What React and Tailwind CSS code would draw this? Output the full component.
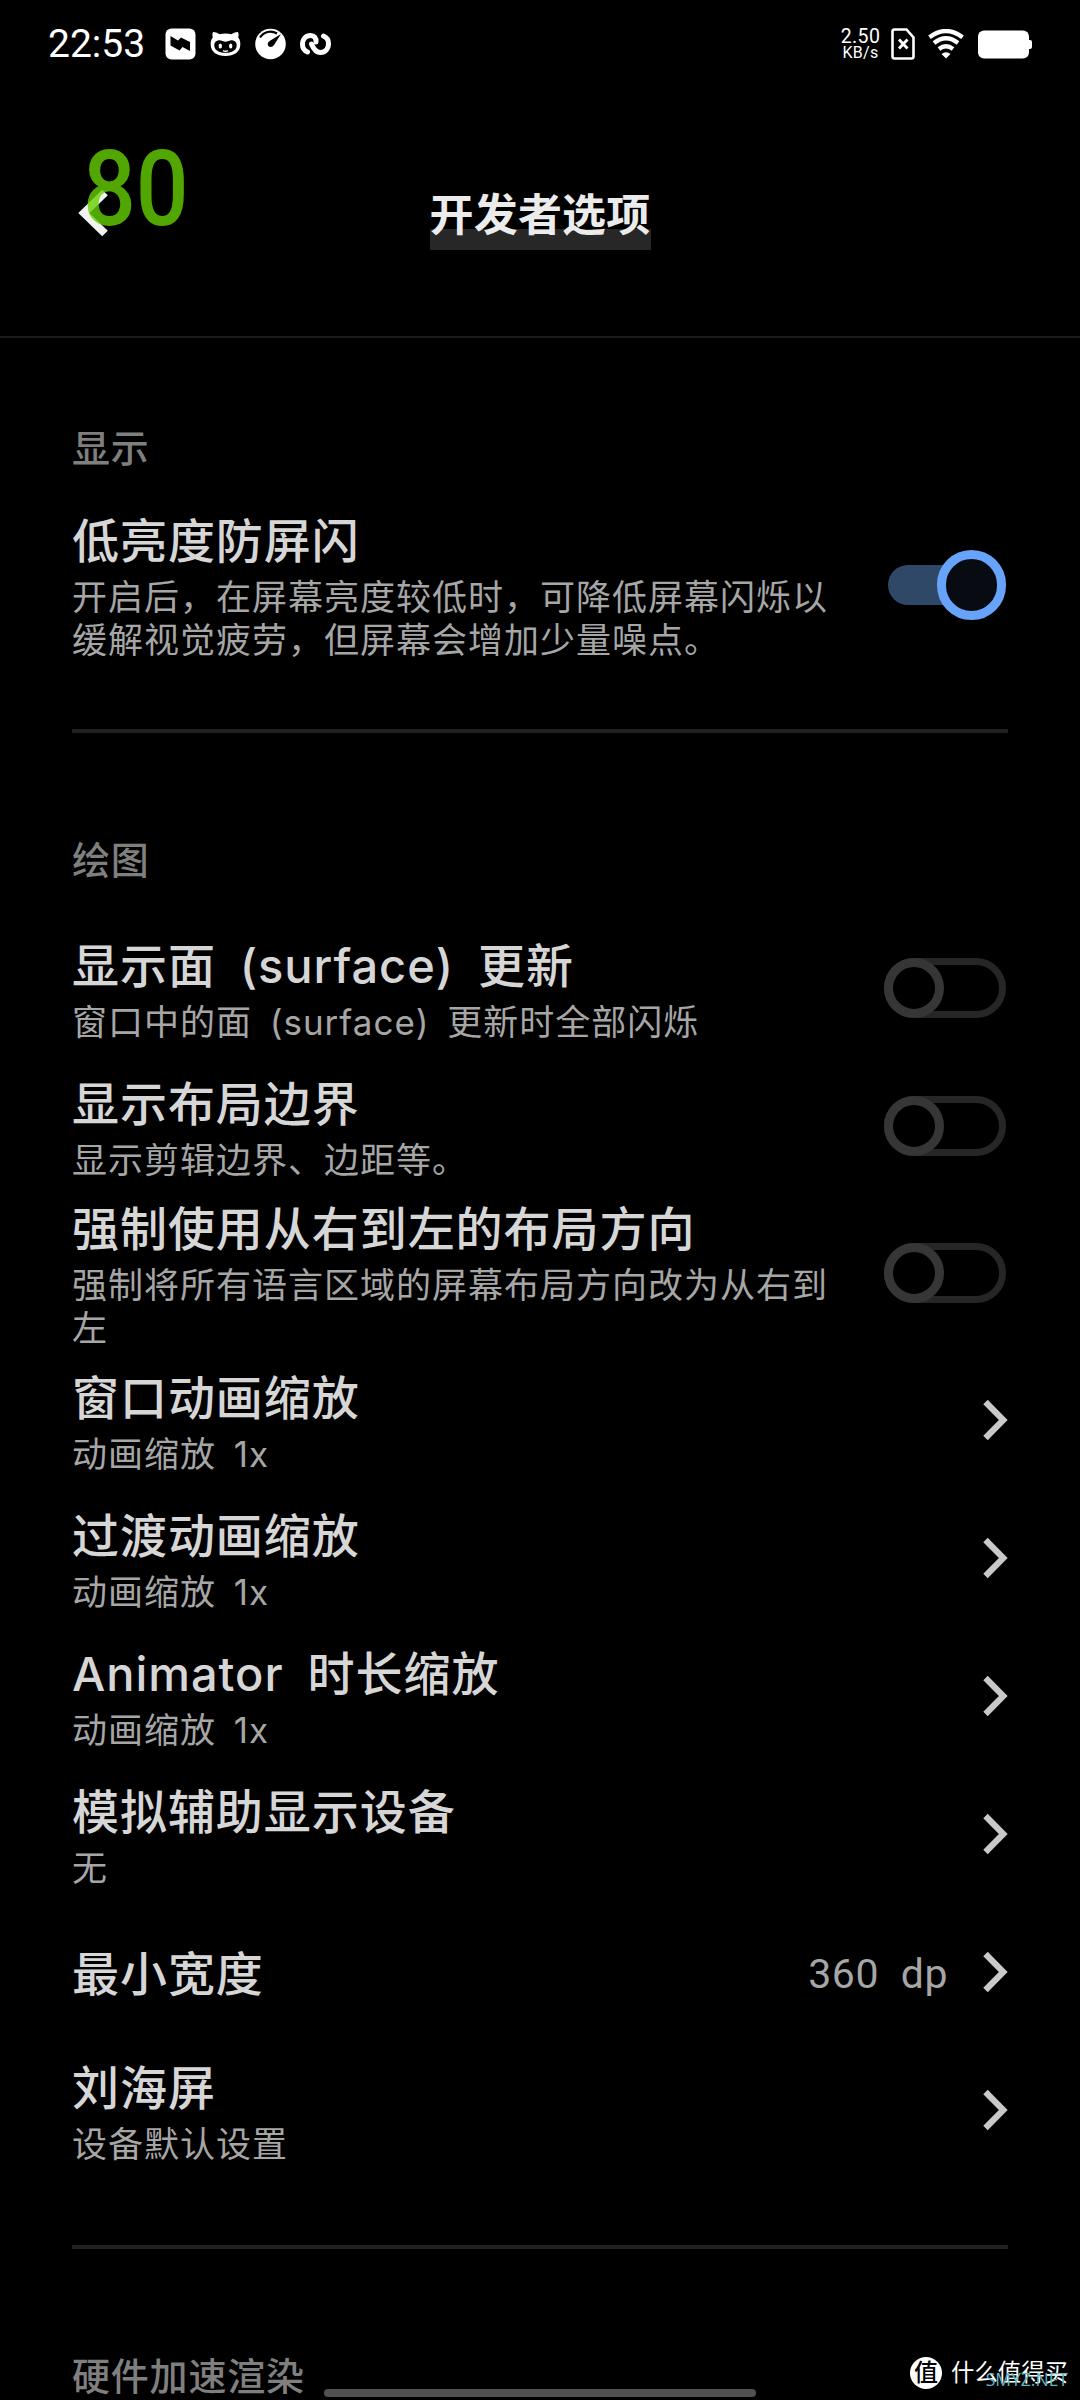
import React, { useState } from "react";

const displayItems = [
  {
    id: "flicker",
    title: "低亮度防屏闪",
    desc: "开启后，在屏幕亮度较低时，可降低屏幕闪烁以缓解视觉疲劳，但屏幕会增加少量噪点。",
    type: "switch",
    tall: true,
  },
];

const drawItems = [
  {
    id: "surface",
    title: "显示面  (surface)  更新",
    desc: "窗口中的面  (surface)  更新时全部闪烁",
    type: "switch",
  },
  {
    id: "bounds",
    title: "显示布局边界",
    desc: "显示剪辑边界、边距等。",
    type: "switch",
  },
  {
    id: "rtl",
    title: "强制使用从右到左的布局方向",
    desc: "强制将所有语言区域的屏幕布局方向改为从右到左",
    type: "switch",
    tall: true,
  },
  { id: "window", title: "窗口动画缩放", desc: "动画缩放  1x", type: "link" },
  { id: "transition", title: "过渡动画缩放", desc: "动画缩放  1x", type: "link" },
  { id: "animator", title: "Animator  时长缩放", desc: "动画缩放  1x", type: "link" },
  { id: "secondary", title: "模拟辅助显示设备", desc: "无", type: "link" },
  { id: "width", title: "最小宽度", value: "360  dp", type: "link" },
  { id: "notch", title: "刘海屏", desc: "设备默认设置", type: "link" },
];

function StatusBar() {
  return (
    <div className="h-[88px] flex items-center justify-between pl-[48px] pr-[48px] text-white">
      <div className="flex items-center">
        <span className="w-[117px] text-[39px] leading-none font-['Roboto']">
          22:53
        </span>
        <svg className="w-[31px] h-[32px]" viewBox="0 0 31 32">
          <rect x="0.5" y="0.5" width="30" height="31" rx="6" fill="#fff" />
          <path
            d="M5.500 8L13 12.500L16 9.500L25 14V23L17.500 19L14.500 22.500L5.500 17.500Z"
            fill="#000"
          />
        </svg>
        <svg className="w-[31px] h-[26px] ml-[14px]" viewBox="0 0 31 26">
          <path
            d="M3 1C6 1 8 2.2 9.5 3.2C13 2.4 18 2.4 21.500 3.200C23 2.200 25 1 28 1C28.800 3 28.700 5 28.200 6.500C30 8.500 30.500 11 30.300 14C30 21 24 25 15.500 25C7 25 1 21 0.700 14C0.500 11 1 8.500 2.800 6.500C2.300 5 2.200 3 3 1Z"
            fill="#fff"
          />
          <path
            d="M8 9.500C11 8.800 13 10.800 15.500 10.800C18 10.800 20 8.800 23 9.500C26 10.200 27 12.500 26.700 15C26 20 21 21.800 15.500 21.800C10 21.800 5 20 4.300 15C4 12.500 5 10.200 8 9.500Z"
            fill="#000"
          />
          <ellipse cx="10.300" cy="15" rx="1.700" ry="2.500" fill="#fff" />
          <ellipse cx="20.700" cy="15" rx="1.700" ry="2.500" fill="#fff" />
          <path d="M13 19.600Q15.500 21 18 19.600" stroke="#fff" strokeWidth="1.400" fill="none" />
        </svg>
        <svg className="w-[31px] h-[32px] ml-[14px]" viewBox="0 0 31 32">
          <circle cx="15.500" cy="16" r="15.300" fill="#fff" />
          <path d="M5 9.500C9 3.500 16 2.200 22 5.500" stroke="#000" strokeWidth="2.200" fill="none" />
          <path d="M26 6L19 17C17.500 19.500 14 19.500 13 17.500C12.200 15.500 13.200 13.800 15 12.800Z" fill="#000" />
        </svg>
        <svg className="w-[31px] h-[24px] ml-[14px]" viewBox="0 0 31 24" fill="none">
          <path
            d="M7.500 20C4 18.500 2.500 16 2.500 12.500C2.500 7 6 3.500 10.500 3.500C14 3.500 16.500 6 16 10"
            stroke="#fff"
            strokeWidth="5"
            strokeLinecap="round"
          />
          <path
            d="M23.500 4C27 5.500 28.500 8 28.500 11.500C28.500 17 25 20.500 20.500 20.500C16 20.500 13.500 17 11.500 12"
            stroke="#fff"
            strokeWidth="5"
            strokeLinecap="round"
          />
        </svg>
      </div>

      <div className="flex items-center">
        <div className="w-[50px] flex flex-col items-center pr-[11px] font-['Roboto'] leading-none">
          <span className="text-[19.500px] leading-[17px] tracking-[0.4px]">2.50</span>
          <span className="text-[16px] leading-[15px] tracking-[0.3px]">KB/s</span>
        </div>
        <svg className="w-[24px] h-[32px]" viewBox="0 0 24 32" fill="none">
          <path
            d="M3.500 1.500H15.500L22.500 9.500V28.500Q22.500 30.500 20.500 30.500H3.500Q1.500 30.500 1.500 28.500V3.500Q1.500 1.500 3.500 1.500Z"
            stroke="#fff"
            strokeWidth="2.600"
          />
          <path d="M8 11.500L16.500 20.500M16.500 11.500L8 20.500" stroke="#fff" strokeWidth="2.800" />
        </svg>
        <svg className="w-[36px] h-[30px] ml-[13px]" viewBox="0 0 36 30" fill="none">
          <path d="M1.500 8.200Q18 -4.200 34.500 8.200" stroke="#fff" strokeWidth="4.300" />
          <path d="M6 14Q18 4.500 30 14" stroke="#fff" strokeWidth="4.300" />
          <path d="M11 20Q18 14.500 25 20" stroke="#fff" strokeWidth="4.300" />
          <path d="M13.500 25Q18 21.500 22.500 25L18 29.500Z" fill="#fff" />
        </svg>
        <svg className="w-[54px] h-[30px] ml-[14px]" viewBox="0 0 54 30">
          <rect x="0" y="1.500" width="51" height="28" rx="6" fill="#fff" />
          <path d="M50 11H52Q54 11 54 13V18Q54 20 52 20H50Z" fill="#fff" />
        </svg>
      </div>
    </div>
  );
}

function Header() {
  return (
    <div className="relative h-[250px] border-b-2 border-[#1b1b1b] flex items-start justify-center">
      <svg
        className="absolute left-[78px] top-[101px] w-[30px] h-[48px]"
        viewBox="0 0 30 48"
        fill="none"
      >
        <path d="M27 3.500L6 24L27 44.500" stroke="#f2f2f2" strokeWidth="8" />
      </svg>
      {/* fps counter floating above the page */}
      <span className="absolute left-[83px] top-[49px] text-[105px] leading-[105px] font-medium font-['Roboto'] text-[#67d003]/80 origin-left scale-x-[0.886]">
        80
      </span>
      <div className="mt-[94px] h-[68px] bg-linear-to-b from-transparent from-[47px] to-[#272727] to-[47px]">
        <h1 className="text-[44px] leading-[66px] tracking-[0.2px] font-bold text-[#ebebeb]">
          开发者选项
        </h1>
      </div>
    </div>
  );
}

function Switch({ checked, onChange }) {
  if (checked) {
    return (
      <button className="relative w-[120px] h-[70px] flex items-center" onClick={onChange}>
        <span className="w-[110px] h-[40px] rounded-full bg-[#2f4868]" />
        <span className="absolute right-[2px] top-0 w-[69px] h-[70px] rounded-full border-[9px] border-[#67a3fa] bg-[#080c12]" />
      </button>
    );
  }
  return (
    <button
      className="relative w-[122px] h-[60px] mr-[2px] rounded-full border-[7px] border-[#262626]"
      onClick={onChange}
    >
      <span className="absolute -left-[7px] -top-[7px] w-[60px] h-[60px] rounded-full border-[9px] border-[#363636] bg-black" />
    </button>
  );
}

function Chevron() {
  return (
    <svg className="w-[25px] h-[42px] shrink-0" viewBox="0 0 25 42" fill="none">
      <path d="M2.500 3L20.300 21L2.500 39" stroke="#c9c9c9" strokeWidth="6.200" />
    </svg>
  );
}

function SettingRow({ item }) {
  const [checked, setChecked] = useState(item.id === "flicker");
  return (
    <div
      className={`${item.tall ? "h-[156px]" : "h-[138px]"} flex items-center justify-between`}
    >
      <div
        className={`${item.value ? "flex-1 pt-[5px]" : "w-[768px]"} whitespace-pre-wrap`}
      >
        <p className="text-[47px] leading-[66px] pb-[2px] tracking-[0.95px] [word-spacing:-1.5px] text-[#d6d6d6] font-medium">
          {item.title}
        </p>
        {item.desc && (
          <p className="text-[35px] leading-[43px] tracking-[1px] [word-spacing:-2px] text-[#a6a6a6] font-normal">
            {item.desc}
          </p>
        )}
      </div>
      {item.type === "switch" && (
        <Switch checked={checked} onChange={() => setChecked(!checked)} />
      )}
      {item.type === "link" && (
        <div className="flex items-center gap-[35px]">
          {item.value && (
            <span className="pt-[5px] text-[41px] leading-none tracking-[0.6px] whitespace-pre text-[#a6a6a6] font-['Roboto']">
              {item.value}
            </span>
          )}
          <Chevron />
        </div>
      )}
    </div>
  );
}

function SectionTitle({ children }) {
  return (
    <div className="h-[120px] pt-[3px] flex items-center text-[38px] tracking-[0.8px] text-[#7f7f7f] font-medium">
      {children}
    </div>
  );
}

function Divider() {
  return <div className="my-[66px] h-[4px] bg-[#212121]" />;
}

function Watermark() {
  return (
    <div className="absolute right-[12px] bottom-[11px] flex items-center gap-[9px]">
      <span className="w-[32px] h-[32px] rounded-full bg-white text-black text-[24px] leading-[31px] text-center font-medium">
        值
      </span>
      <span className="text-[23.400px] leading-[32px] text-white">什么值得买</span>
      <span className="absolute right-0 bottom-0 text-[17.500px] leading-[20px] text-[#62b4c2] font-['Open_Sans']">
        SMYZ.NET
      </span>
    </div>
  );
}

export default function App() {
  return (
    <div className="relative w-[1080px] h-[2400px] bg-black overflow-hidden font-['Inter','Noto_Sans_CJK_SC',sans-serif]">
      <StatusBar />
      <Header />
      <div className="px-[72px] pt-[49px]">
        <SectionTitle>显示</SectionTitle>
        {displayItems.map((item) => (
          <SettingRow key={item.id} item={item} />
        ))}
        <Divider />
        <SectionTitle>绘图</SectionTitle>
        {drawItems.map((item) => (
          <SettingRow key={item.id} item={item} />
        ))}
        <Divider />
        <SectionTitle>硬件加速渲染</SectionTitle>
      </div>
      <div className="absolute left-[324px] bottom-[3px] w-[432px] h-[8px] rounded-full bg-[#515151]" />
      <Watermark />
    </div>
  );
}
